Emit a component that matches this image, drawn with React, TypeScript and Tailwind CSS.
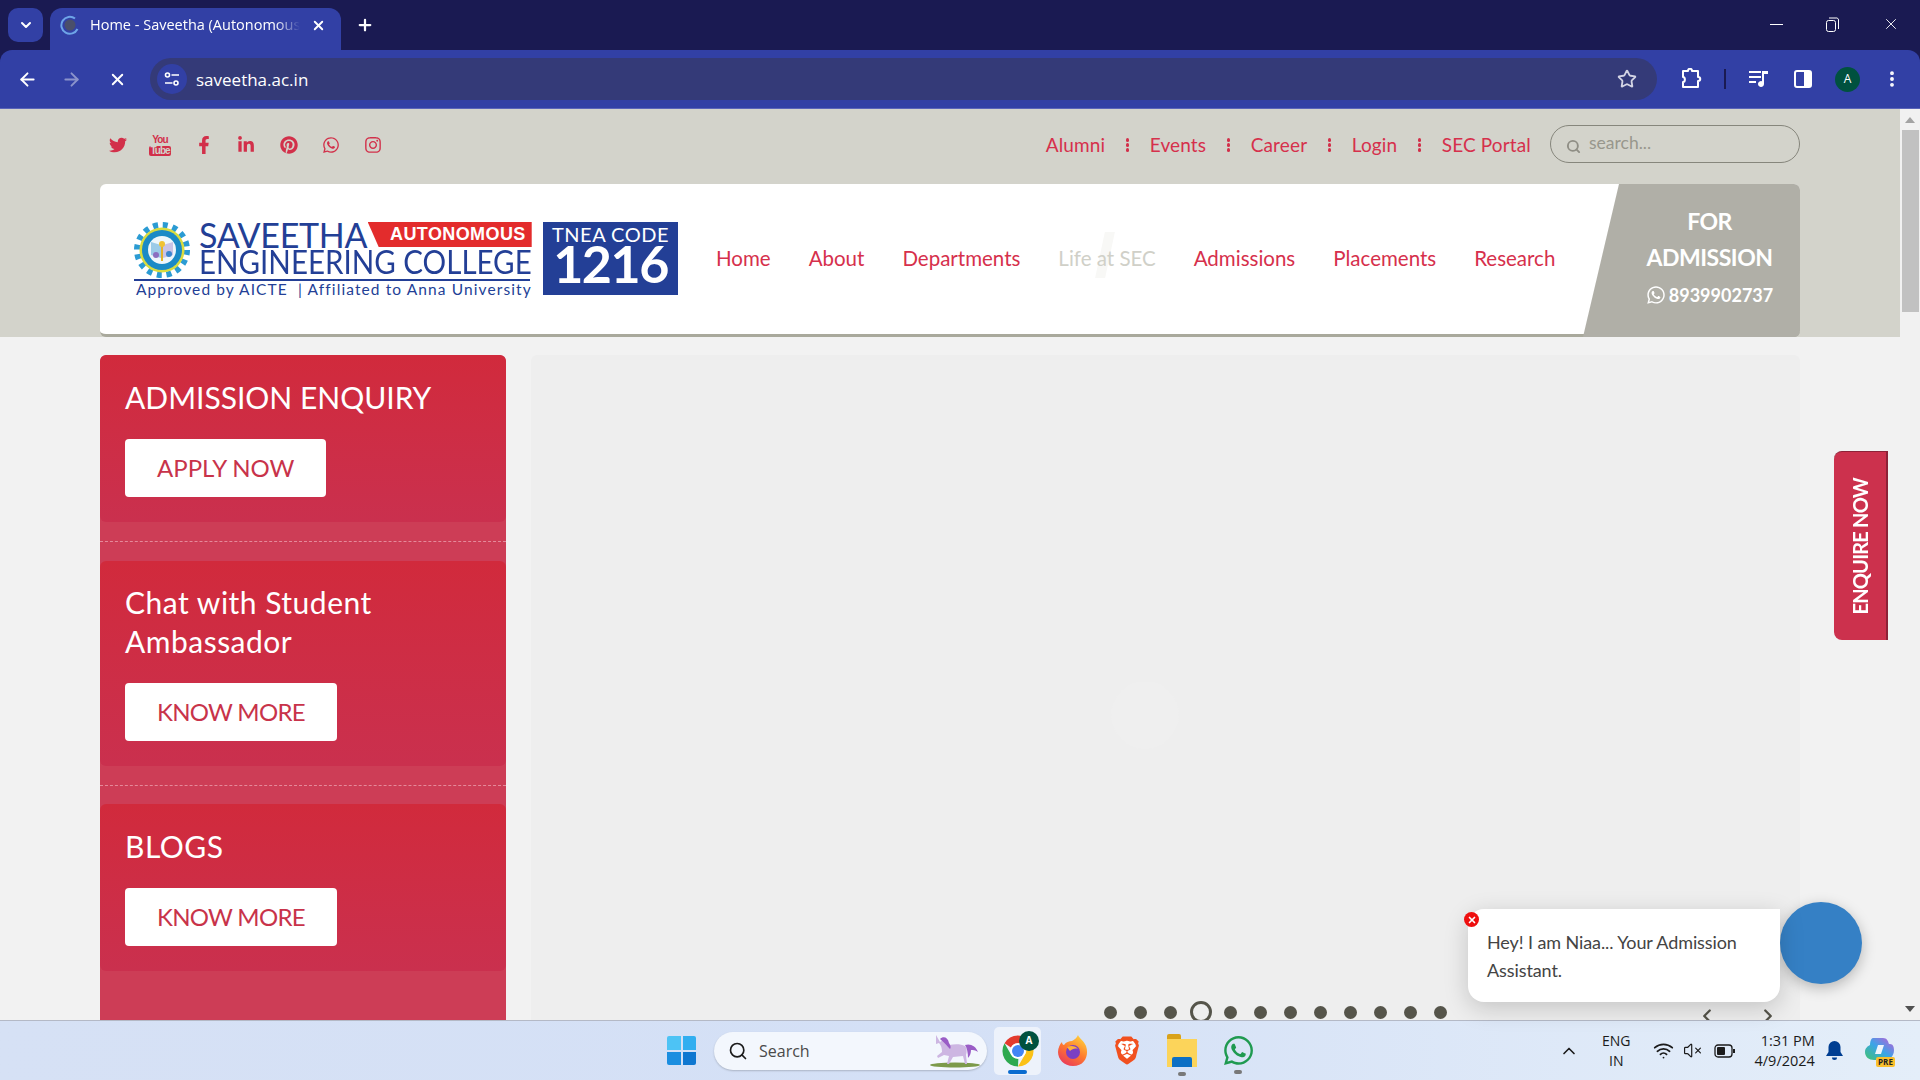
import { ArrowLeft, ArrowRight, ChevronDown, ChevronLeft, ChevronRight, ChevronUp, EllipsisVertical, Plus, Search, Star, VolumeX, Wifi, X } from "lucide-react";
import { FaFacebookF, FaInstagram, FaLinkedinIn, FaPinterest, FaTwitter, FaWhatsapp } from "react-icons/fa";
import { SiBrave } from "react-icons/si";

const nav = ["Home", "About", "Departments", "Life at SEC", "Admissions", "Placements", "Research"];
const dots = [0, 1, 2, 3, 4, 5, 6, 7, 8, 9, 10, 11];

function YoutubeMark() {
  return (
    <div className="flex w-[17px] flex-col items-center text-[#d2304a] font-['Liberation_Sans',sans-serif] font-bold leading-none">
      <span className="text-[10px] tracking-[-0.8px]">You</span>
      <span className="mt-px rounded-[2px] bg-[#d2304a] px-px text-[10px] tracking-[-1px] text-[#d3d3cb]">Tube</span>
    </div>
  );
}

function TopDots() {
  return (
    <span className="mx-[20.5px] flex flex-col gap-[1.5px]">
      <i className="block h-[3.5px] w-[3.5px] rounded-full bg-[#d2304a]" />
      <i className="block h-[3.5px] w-[3.5px] rounded-full bg-[#d2304a]" />
      <i className="block h-[3.5px] w-[3.5px] rounded-full bg-[#d2304a]" />
    </span>
  );
}

function TopBar() {
  return (
    <div className="flex h-[75px] items-center pb-[3px] pl-[109px] pr-[100px]">
      <div className="flex items-center text-[#d2304a] text-[18px]">
        <div className="flex w-[42.5px]"><FaTwitter /></div>
        <div className="flex w-[43px]"><YoutubeMark /></div>
        <div className="flex w-[42.5px]"><FaFacebookF /></div>
        <div className="flex w-[42.5px]"><FaLinkedinIn /></div>
        <div className="flex w-[42px]"><FaPinterest /></div>
        <div className="flex w-[42.5px]"><FaWhatsapp /></div>
        <FaInstagram />
      </div>
      <div className="ml-auto flex items-center text-[19px] tracking-[0.14px] text-[#d6304c] font-[Lato,sans-serif]">
        <span>Alumni</span>
        <TopDots />
        <span>Events</span>
        <TopDots />
        <span>Career</span>
        <TopDots />
        <span>Login</span>
        <TopDots />
        <span>SEC Portal</span>
      </div>
      <div className="ml-[19px] -mt-[3px] flex h-[38px] w-[250px] items-center rounded-full border border-[#86867c] pl-[15px] text-[#8f8e85]">
        <Search size={15} strokeWidth={3} className="mt-[6px]" />
        <span className="ml-[8px] text-[17.5px] font-[Lato,sans-serif] text-[#98978d]">search...</span>
      </div>
    </div>
  );
}

function Emblem() {
  return (
    <svg width="56" height="56" viewBox="0 0 56 56" className="shrink-0">
      <circle cx="28" cy="28" r="25" fill="none" stroke="#2b9bd3" strokeWidth="6" strokeDasharray="5 4.82" />
      <circle cx="28" cy="28" r="22.5" fill="#d9dc3f" />
      <circle cx="28" cy="28" r="20" fill="#1b8ac6" />
      <circle cx="28" cy="28" r="14" fill="#eef6fb" />
      <path d="M17 20 L27 23 L27 36 L17 33Z" fill="#9ccbe8" />
      <path d="M39 20 L29 23 L29 36 L39 33Z" fill="#c9c3e6" />
      <rect x="27" y="22" width="2" height="17" fill="#e3b22c" />
      <circle cx="28" cy="22" r="3" fill="#f0c233" />
      <circle cx="22" cy="33" r="3" fill="#8d6fc0" />
      <circle cx="35" cy="32" r="3" fill="#3d86cf" />
    </svg>
  );
}

function Logo() {
  return (
    <div className="flex items-start pt-[38px] pl-[34px]">
      <div className="w-[396px]">
        <div className="flex h-[57px]">
          <Emblem />
          <div className="ml-[9px] flex-1 text-[#233f96] font-[Lato,sans-serif]">
            <div className="flex h-[25px] items-center">
              <span className="text-[34px] leading-none tracking-[-0.3px]">SAVEETHA</span>
              <div className="ml-auto flex h-[25px] w-[164px] items-center justify-end bg-[#e32c2c] pr-[6px] text-[18px] font-bold tracking-[0.4px] text-white [clip-path:polygon(0_0,100%_0,100%_100%,11px_100%)] font-['Liberation_Sans',sans-serif]">AUTONOMOUS</div>
            </div>
            <div className="mt-[2px] h-[26px] scale-y-110 text-[29.5px] leading-[26px] whitespace-nowrap">ENGINEERING COLLEGE</div>
          </div>
        </div>
        <div className="h-[2px] bg-[#233f96]" />
        <div className="-mt-[1px] whitespace-nowrap pl-[2px] text-[15.5px] leading-[18px] tracking-[1.1px] text-[#233f96] font-[Lato,sans-serif]">Approved by AICTE&nbsp; | Affiliated to Anna University</div>
      </div>
      <div className="ml-[13px] flex h-[73px] w-[135px] flex-col items-center bg-[#233f96] text-white font-[Lato,sans-serif]">
        <span className="mt-[3px] text-[20px] leading-[19px] tracking-[0.5px]">TNEA CODE</span>
        <span className="text-[52px] leading-[38px] tracking-[-1.5px] font-bold">1216</span>
      </div>
    </div>
  );
}

function Header() {
  return (
    <div className="pl-[100px] pr-[100px]">
      <div className="flex h-[153px] w-[1700px] rounded-[6px] border-b-[3px] border-[#a9a99c] bg-white">
        <Logo />
        <div className="ml-[38px] flex h-[150px] items-center gap-[38px] pb-[1px] text-[20.5px] text-[#d6304c] font-[Lato,sans-serif]">
          {nav.map((n) =>
            n === "Life at SEC" ? (
              <span key={n} className="relative text-[#d0d0c8]">
                <i className="absolute left-[42px] -top-[11px] h-[46px] w-[10px] -skew-x-12 bg-[#f8f8f6]" />
                <span className="relative">{n}</span>
              </span>
            ) : (
              <span key={n}>{n}</span>
            ),
          )}
        </div>
        <div className="ml-auto -mb-[3px] w-[217px] overflow-hidden rounded-r-[6px]">
          <div className="flex h-full flex-col items-center bg-[#b0afa7] pl-[36px] pt-[19px] text-white font-bold font-[Lato,sans-serif] [clip-path:polygon(36px_0,100%_0,100%_100%,0_100%)]">
            <span className="text-[23px] leading-[36px] tracking-[-0.5px]">FOR</span>
            <span className="text-[23px] leading-[36px] tracking-[-0.5px]">ADMISSION</span>
            <span className="mt-[2px] flex items-center gap-[3px] text-[18px] leading-[36px]"><FaWhatsapp className="text-[20px]" />8939902737</span>
          </div>
        </div>
      </div>
    </div>
  );
}

function SideCard({ title, action, className, titleClass, actionClass }: { title: string; action: string; className: string; titleClass: string; actionClass: string }) {
  return (
    <div className={`rounded-[6px] bg-gradient-to-b from-[#d12a3c] to-[#ca304e] pb-[25px] pl-[25px] pr-[25px] ${className}`}>
      <h2 className={`mb-[22px] text-[30px] leading-[39px] text-white font-[Lato,sans-serif] ${titleClass}`}>{title}</h2>
      <div className={`inline-flex h-[58px] items-center rounded-[4px] bg-white px-[32px] text-[24px] text-[#c8334a] font-[Lato,sans-serif] ${actionClass}`}>{action}</div>
    </div>
  );
}

function Sidebar() {
  return (
    <div className="w-[406px] shrink-0 overflow-hidden rounded-t-[6px] bg-[#cd3d56] pb-[50px]">
      <SideCard title="ADMISSION ENQUIRY" action="APPLY NOW" className="pt-[23px]" titleClass="" actionClass="" />
      <div className="flex h-[39px] items-center">
        <div className="w-full border-t border-dashed border-[#e58a9a]" />
      </div>
      <SideCard title="Chat with Student Ambassador" action="KNOW MORE" className="pt-[22px]" titleClass="tracking-[0.5px]" actionClass="tracking-[-0.7px]" />
      <div className="flex h-[38px] items-center">
        <div className="w-full border-t border-dashed border-[#e58a9a]" />
      </div>
      <SideCard title="BLOGS" action="KNOW MORE" className="pt-[23px]" titleClass="tracking-[0.5px]" actionClass="tracking-[-0.7px]" />
    </div>
  );
}

function Slider() {
  return (
    <div className="relative h-[700px] flex-1 rounded-t-[6px] bg-[#eeeeee]">
      <div className="absolute left-[580px] top-[326px] h-[68px] w-[68px] rounded-full bg-[#efefef]" />
      <div className="absolute left-[564.5px] top-[646px] flex h-[22px] items-center">
        {dots.map((d) =>
          d === 3 ? (
            <span key={d} className="mx-[4px] h-[22px] w-[22px] rounded-full border-[3px] border-[#55544a]" />
          ) : (
            <span key={d} className="mx-[8.5px] h-[13px] w-[13px] rounded-full bg-[#55544a]" />
          ),
        )}
      </div>
      <ChevronLeft size={22} strokeWidth={2.5} className="absolute left-[1165px] top-[650px] text-[#55544a]" />
      <ChevronRight size={22} strokeWidth={2.5} className="absolute left-[1226px] top-[650px] text-[#55544a]" />
    </div>
  );
}

function Scrollbar() {
  return (
    <div className="flex w-[20px] shrink-0 flex-col items-center bg-[#f1f1f1]">
      <span className="mt-[8px] h-0 w-0 border-x-[5px] border-b-[6px] border-x-transparent border-b-[#a3a3a3]" />
      <div className="mt-[7px] h-[182px] w-[17px] bg-[#c1c1c1]" />
      <span className="mt-auto mb-[8px] h-0 w-0 border-x-[5px] border-t-[6px] border-x-transparent border-t-[#505050]" />
    </div>
  );
}

function ChatWidget() {
  return (
    <div className="absolute left-[1468px] top-[793px] flex items-start">
      <div className="relative mt-[7px] h-[93px] w-[312px] rounded-[16px] rounded-tr-none bg-white pl-[19px] pt-[19px] text-[18px] leading-[28px] tracking-[-0.1px] text-[#444444] shadow-[0_6px_24px_rgba(0,0,0,0.18)] font-[Lato,sans-serif]">
        <span className="absolute -left-[4px] top-[3px] flex h-[15px] w-[15px] items-center justify-center rounded-full bg-[#ee0f0f] text-white"><X size={10} strokeWidth={4} /></span>
        Hey! I am Niaa... Your Admission Assistant.
      </div>
      <div className="h-[82px] w-[82px] rounded-full bg-[#3580c5] shadow-[0_4px_14px_rgba(0,0,0,0.25)]" />
    </div>
  );
}

function EnquireTab() {
  return (
    <div className="absolute left-[1834px] top-[342px] flex h-[189px] w-[54px] items-center justify-center rounded-l-[8px] border-r-2 border-t border-[#8d2238] bg-[#cc314d]">
      <span className="text-[20px] font-bold tracking-[-0.8px] text-white [writing-mode:vertical-rl] rotate-180 font-[Lato,sans-serif]">ENQUIRE NOW</span>
    </div>
  );
}

function BrowserChrome() {
  return (
    <div className="shrink-0 bg-[#1a1a52] text-white">
      <div className="flex h-[50px] items-end pl-[8px]">
        <div className="mb-[8px] flex h-[34px] w-[35px] items-center justify-center rounded-[10px] bg-[#3240a5]"><ChevronDown size={16} strokeWidth={3} /></div>
        <div className="ml-[7px] flex h-[42px] w-[291px] items-center rounded-t-[12px] bg-[#3240a5] pb-[8px] pl-[10px]">
          <svg width="20" height="20" viewBox="0 0 20 20" fill="none">
            <circle cx="10" cy="10" r="5.500" fill="#4a4f6b" />
            <path d="M15 3.500A8.500 8.500 0 1 0 17.500 14" stroke="#6ea5e8" strokeWidth="2" />
          </svg>
          <span className="ml-[10px] w-[210px] overflow-hidden whitespace-nowrap text-[14.5px] font-['Open_Sans',sans-serif] [mask-image:linear-gradient(to_right,black_88%,transparent)]">Home - Saveetha (Autonomous</span>
          <X size={15} strokeWidth={3} className="ml-[11px]" />
        </div>
        <Plus size={18} strokeWidth={3} className="mb-[16px] ml-[15px]" />
        <div className="mb-[17px] ml-auto mr-[20px] flex items-center gap-[43px]">
          <span className="h-px w-[13px] bg-white" />
          <svg width="13" height="15" viewBox="0 0 13 15" fill="none" stroke="white" strokeWidth="1">
            <rect x="0.500" y="3.500" width="9" height="11" rx="2" /><path d="M3 1h7a2 2 0 0 1 2.500 2v9" />
          </svg>
          <X size={18} strokeWidth={1.2} />
        </div>
      </div>
      <div className="flex h-[59px] items-center rounded-t-[12px] border-b border-[#5a64b8] bg-[#3240a5] pl-[17px]">
        <ArrowLeft size={21} strokeWidth={2.2} />
        <ArrowRight size={21} strokeWidth={2.2} className="ml-[23px] text-[#8b93cb]" />
        <X size={19} strokeWidth={2.4} className="ml-[26px]" />
        <div className="ml-[23px] flex h-[42px] w-[1507px] items-center rounded-full bg-[#343a78] pl-[7px]">
          <div className="flex h-[30px] w-[30px] items-center justify-center rounded-full bg-[#3240a5]">
            <svg width="16" height="16" viewBox="0 0 16 16" fill="none" stroke="white" strokeWidth="1.6">
              <circle cx="3.500" cy="4" r="2" /><path d="M7.500 4H15M1 12h7.500" /><circle cx="12" cy="12" r="2" />
            </svg>
          </div>
          <span className="ml-[9px] mt-px text-[17px] font-['Open_Sans',sans-serif]">saveetha.ac.in</span>
          <Star size={20} strokeWidth={2.2} className="ml-auto mr-[20px] text-[#d3d4e4]" />
        </div>
        <svg width="22" height="22" viewBox="0 0 22 22" fill="none" stroke="white" strokeWidth="2" className="ml-[23px]">
          <path d="M3 3h5c0-3 4-3 4 0h6v6c3 0 3 4 0 4v6H3v-5c2.500 0 2.500-5 0-5z" strokeLinejoin="round" />
        </svg>
        <span className="ml-[22px] h-[20px] w-[2px] bg-[#1a1a52]" />
        <svg width="20" height="18" viewBox="0 0 20 18" fill="white" className="ml-[23px]">
          <path d="M0 1h12v2H0zM0 6h12v2H0zM0 11h7v2H0z" /><path d="M13 1h6v3h-4v10a3 3 0 1 1-2-2.800z" />
        </svg>
        <svg width="18" height="18" viewBox="0 0 18 18" className="ml-[25px]">
          <rect x="1" y="1" width="16" height="16" rx="2" fill="none" stroke="white" strokeWidth="2" /><rect x="10" y="1" width="7" height="16" fill="white" />
        </svg>
        <span className="ml-[23px] flex h-[25px] w-[25px] items-center justify-center rounded-full bg-[#00513f] text-[12px] font-['Open_Sans',sans-serif]">A</span>
        <EllipsisVertical size={20} strokeWidth={2.6} className="ml-[22px]" />
      </div>
    </div>
  );
}

function ChromeIcon() {
  return (
    <svg width="34" height="34" viewBox="0 0 48 48">
      <path d="M24 2a22 22 0 0 1 19 11H24a11 11 0 0 0-10 6L5 13A22 22 0 0 1 24 2z" fill="#e33b2e" />
      <path d="M43 13a22 22 0 0 1-19 33l9.500-16.500A11 11 0 0 0 33 16z" fill="#fbc116" />
      <path d="M5 13l9.500 16.500a11 11 0 0 0 10 5L24 46A22 22 0 0 1 5 13z" fill="#2da94f" />
      <circle cx="24" cy="24" r="11" fill="#fff" />
      <circle cx="24" cy="24" r="8.500" fill="#4285f4" />
    </svg>
  );
}

function FirefoxIcon() {
  return (
    <svg width="30" height="32" viewBox="0 0 30 32">
      <defs>
        <linearGradient id="ffx" x1="0.800" y1="0" x2="0.200" y2="1">
          <stop offset="0" stopColor="#ffd43b" /><stop offset="0.5" stopColor="#ff7a2e" /><stop offset="1" stopColor="#e8365d" />
        </linearGradient>
      </defs>
      <path d="M20 0c1 3 6 6 8 11 3 8 0 20-13 20C6 31 0 24 0 17c0-4 2-8 4-10 0 2 1 3 2 3 2-3 5-4 8-4 2-1 5-3 6-6z" fill="url(#ffx)" />
      <circle cx="15" cy="17" r="7" fill="#7b3fc4" />
      <path d="M9 12c4-2 9-1 11 2-3-1-6 0-8 2z" fill="#ffb03a" />
    </svg>
  );
}

function Unicorn() {
  return (
    <svg width="52" height="34" viewBox="0 0 52 34">
      <ellipse cx="26" cy="31" rx="25" ry="2.500" fill="#7c9a4a" />
      <path d="M7 1l4 7 3-2c3 0 4 3 6 5 6-1 12-1 16 1 2 2 2 6 1 9l1 9h-2l-2-8-10 1-4 7h-2l2-8-5-1-6 3-1-2 5-4c0-4-1-7-3-9l-3 1z" fill="#cdb6e2" />
      <path d="M11 5c3-3 8-2 9 4 2 3 2 5 1 6-2-2-5-6-10-10zM36 11c5-2 11 1 13 7-3-2-5-2-7-2 0 3-1 6-3 8 0-5-1-10-3-13z" fill="#9a5dc6" />
    </svg>
  );
}

function Taskbar() {
  return (
    <div className="flex h-[60px] shrink-0 items-center border-t border-[#b4b9c6] bg-gradient-to-r from-[#d6e1f5] via-[#d4e0f6] to-[#e4eef9] font-['Open_Sans',sans-serif] text-[#1b1b1b]">
      <div className="ml-[667px] grid h-[29px] w-[29px] grid-cols-2 gap-[2px]">
        <i className="rounded-tl-[2px] bg-[#4dc3f5]" />
        <i className="rounded-tr-[2px] bg-[#31aef0]" />
        <i className="rounded-bl-[2px] bg-[#1b8ee0]" />
        <i className="rounded-br-[2px] bg-[#0f77d0]" />
      </div>
      <div className="ml-[18px] flex h-[38px] w-[273px] items-center rounded-full bg-[#f3f7fd] pl-[14px] shadow-[0_1px_2px_rgba(0,0,0,0.2)]">
        <Search size={20} strokeWidth={2} />
        <span className="ml-[11px] text-[16px] text-[#4a4a4a]">Search</span>
        <div className="ml-auto mr-[6px]"><Unicorn /></div>
      </div>
      <div className="relative ml-[7px] flex h-[48px] w-[47px] items-center justify-center rounded-[5px] bg-[#edf2fb]">
        <ChromeIcon />
        <span className="absolute left-[25px] top-[4px] flex h-[20px] w-[20px] items-center justify-center rounded-full bg-[#00513f] text-[10px] font-bold text-white">A</span>
        <span className="absolute bottom-[1px] left-[14px] h-[4px] w-[19px] rounded-full bg-[#0a6cd0]" />
      </div>
      <div className="ml-[17px] flex w-[30px] items-center justify-center"><FirefoxIcon /></div>
      <div className="relative ml-[25px] flex w-[28px] justify-center">
        <i className="absolute left-[6px] top-[4px] h-[22px] w-[16px] rounded-[4px] bg-white" />
        <SiBrave size={31} className="relative text-[#f1501f]" />
      </div>
      <div className="relative ml-[26px] w-[30px]">
        <div className="h-[5px] w-[14px] rounded-t-[2px] bg-[#d9a21b]" />
        <div className="relative h-[28px] w-[30px] bg-[#fcd45a]">
          <div className="absolute bottom-0 left-[5px] h-[10px] w-[20px] rounded-t-[2px] bg-[#0c6fc4]" />
        </div>
        <span className="absolute -bottom-[9px] left-[11px] h-[4px] w-[8px] rounded-full bg-[#787878]" />
      </div>
      <div className="relative ml-[25px] w-[30px]">
        <FaWhatsapp size={33} className="text-[#1f9a50]" />
        <span className="absolute -bottom-[7px] left-[12px] h-[4px] w-[8px] rounded-full bg-[#787878]" />
      </div>
      <ChevronUp size={20} strokeWidth={2} className="ml-[307px]" />
      <div className="ml-[23px] flex flex-col items-center text-[14px] leading-[20px]"><span>ENG</span><span>IN</span></div>
      <Wifi size={21} strokeWidth={2} className="ml-[22px]" />
      <VolumeX size={19} strokeWidth={1.5} className="ml-[9px]" />
      <svg width="21" height="14" viewBox="0 0 21 14" className="ml-[12px]">
        <rect x="1" y="1" width="17" height="12" rx="3" fill="none" stroke="#1b1b1b" strokeWidth="1.300" /><rect x="3" y="3" width="8" height="8" rx="1" fill="#1b1b1b" /><rect x="19" y="5" width="2" height="4" fill="#1b1b1b" />
      </svg>
      <div className="ml-[20px] flex flex-col items-end text-[14.5px] leading-[20px]"><span>1:31 PM</span><span>4/9/2024</span></div>
      <svg width="17" height="20" viewBox="0 0 17 20" fill="#003e92" className="ml-[11px]">
        <path d="M8.500 0a6 6 0 0 0-6 6v5L0 15h17l-2.500-4V6a6 6 0 0 0-6-6zM6 16.500h5a2.500 2.500 0 0 1-5 0z" />
      </svg>
      <div className="relative ml-[22px] h-[28px] w-[29px]">
        <svg width="29" height="24" viewBox="0 0 29 24">
          <defs>
            <linearGradient id="cop" x1="0" y1="1" x2="1" y2="0">
              <stop offset="0" stopColor="#41c46d" /><stop offset="0.500" stopColor="#3aa4e8" /><stop offset="1" stopColor="#c45ad6" />
            </linearGradient>
          </defs>
          <path d="M8 1h10c4 0 5 3 6 6h1c3 0 4 3 4 6 0 6-4 10-9 10H9c-5 0-9-3-9-8 0-4 3-6 5-7 0-3 1-7 3-7z" fill="url(#cop)" />
          <path d="M13 8h6l-3 9h-6z" fill="#eef4fb" />
        </svg>
        <span className="absolute -bottom-[2px] right-[-1px] rounded-[2px] bg-[#fbc02d] px-[2px] text-[8px] font-bold leading-[10px] text-[#222]">PRE</span>
      </div>
    </div>
  );
}

export default function App() {
  return (
    <div className="relative flex h-screen w-[1920px] flex-col overflow-hidden bg-[#f2f2f2]">
      <BrowserChrome />
      <div className="relative flex min-h-0 flex-1">
        <div className="min-w-0 flex-1 overflow-hidden">
          <div className="bg-[#d3d3cb]">
            <TopBar />
            <Header />
          </div>
          <div className="flex gap-[25px] pl-[100px] pr-[100px] pt-[18px]">
            <Sidebar />
            <Slider />
          </div>
        </div>
        <Scrollbar />
        <ChatWidget />
        <EnquireTab />
      </div>
      <Taskbar />
    </div>
  );
}
